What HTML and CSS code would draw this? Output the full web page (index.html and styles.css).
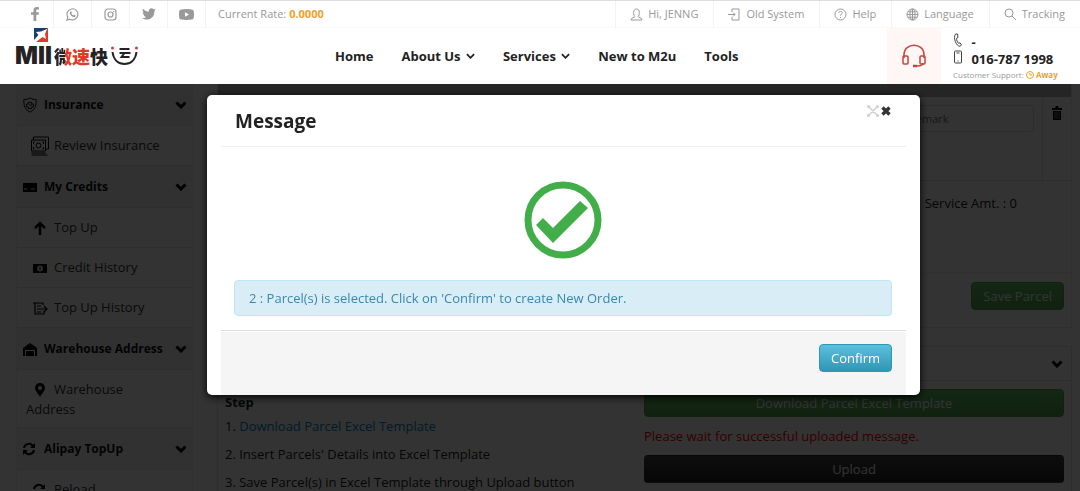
FILE: index.html
```html
<!DOCTYPE html>
<html lang="en">
<head>
    <meta charset="UTF-8">
    <meta name="viewport" content="width=device-width, initial-scale=1.0">
    <title>M2u - Parcel Order</title>
    <link rel="stylesheet" href="styles.css">
</head>
<body>
    <!-- shared icons -->
    <svg class="sprite" aria-hidden="true">
        <symbol id="chevron" viewBox="0 0 12 8"><path d="M1.500 1.500 6 6l4.500-4.500" fill="none" stroke="currentColor" stroke-width="3"/></symbol>
        <symbol id="caret" viewBox="0 0 10 6"><path d="M1 1l4 4 4-4" fill="none" stroke="currentColor" stroke-width="2"/></symbol>
        <symbol id="refresh" viewBox="0 0 14 14"><path d="M2 6a5 5 0 0 1 9-2M12 8a5 5 0 0 1-9 2" fill="none" stroke="currentColor" stroke-width="2"/><path d="M13 1v5H8zM1 13V8h5z" fill="currentColor"/></symbol>
    </svg>

    <header class="site-header">
        <div class="topbar">
            <div class="social">
                <a href="#" aria-label="Facebook"><svg width="10" height="14" viewBox="0 0 10 14"><path fill="currentColor" d="M9 .2v2.300H7.500C6.600 2.500 6.300 3 6.300 3.700V5.200H9l-.4 2.500H6.300V14H3.500V7.700H1V5.200h2.500V3.200C3.500 1.200 4.800 0 6.800 0z"/></svg></a>
                <a href="#" aria-label="WhatsApp"><svg width="13" height="13" viewBox="0 0 14 14"><path fill="none" stroke="currentColor" stroke-width="1.200" d="M1 13l.9-3.200A5.900 5.900 0 1 1 4.200 12z"/><path fill="currentColor" d="M4.800 3.700c.5-.4.9-.1 1 .3l.5 1.100c0 .4-.4.700-.6.900.5 1 1.200 1.600 2.200 2 .3-.2.600-.8.900-.7l1.400.7c.2.100 0 .8-.2 1.100-1.200 1.100-2.900.4-4.200-.8C4.200 6.900 3.400 5 4.800 3.700z"/></svg></a>
                <a href="#" aria-label="Instagram"><svg width="13" height="13" viewBox="0 0 13 13" fill="none" stroke="currentColor" stroke-width="1.200"><rect x="1" y="1" width="11" height="11" rx="3"/><circle cx="6.500" cy="6.500" r="2.500"/><path d="M9.200 3.600h1"/></svg></a>
                <a href="#" aria-label="Twitter"><svg width="14" height="12" viewBox="0 0 14 12"><path fill="currentColor" d="M13.800 1.600c-.5.200-1 .4-1.600.4.600-.3 1-.9 1.200-1.500-.6.300-1.100.5-1.800.7A2.800 2.800 0 0 0 6.800 3.700C4.400 3.600 2.400 2.500 1 .8.300 2 .6 3.700 1.900 4.500c-.5 0-.9-.1-1.300-.3 0 1.300.9 2.500 2.200 2.800-.4.100-.8.100-1.200 0 .4 1.100 1.400 1.900 2.600 2-1.200.9-2.600 1.300-4.100 1.200 6.300 3.800 12.500-.6 12.300-7.100.5-.4 1-.9 1.400-1.500z"/></svg></a>
                <a href="#" aria-label="YouTube"><svg width="15" height="11" viewBox="0 0 15 11"><path fill="currentColor" fill-rule="evenodd" d="M2 .4Q7.500-.2 13 .4 14.600.6 14.800 2.500 15.200 5.500 14.800 8.500 14.600 10.400 13 10.600 7.500 11.200 2 10.600.4 10.400.2 8.500-.2 5.500.2 2.500.4.6 2 .4zM6 3.200v4.600l4-2.300z"/></svg></a>
            </div>
            <p class="rate">Current Rate: <b>0.0000</b></p>
            <nav class="toplinks" aria-label="Account">
                <a href="#"><svg width="13" height="13" viewBox="0 0 13 13"><path d="M5 8.500C3.300 7.500 2.500 1 6.500 1S9.700 7.500 8 8.500c0 1 4 .8 4 3.500H1c0-2.700 4-2.500 4-3.500z"/></svg>Hi, JENNG</a>
                <a href="#"><svg width="13" height="13" viewBox="0 0 13 13"><path d="M4 4V1h7v11H4V9M0 6.500h7M5 4.500l2 2-2 2"/></svg>Old System</a>
                <a href="#"><svg width="13" height="13" viewBox="0 0 13 13"><circle cx="6.500" cy="6.500" r="5.500"/><path d="M4.800 5c0-2.300 3.500-2.200 3.500-.1 0 1.200-1.800 1.300-1.800 2.800M6.500 9v1"/></svg>Help</a>
                <a href="#"><svg width="13" height="13" viewBox="0 0 13 13"><circle cx="6.500" cy="6.500" r="5.500"/><ellipse cx="6.500" cy="6.500" rx="2.600" ry="5.500"/><path d="M6.500 1v11M1 6.500h11M2 3.800h9M2 9.200h9"/></svg>Language</a>
                <a href="#"><svg width="13" height="13" viewBox="0 0 13 13"><circle cx="5" cy="5" r="4"/><path d="M8 8l4 4"/></svg>Tracking</a>
            </nav>
        </div>

        <div class="mainbar">
            <a href="#" class="logo" aria-label="M2u home">
                <svg class="logo-flag" width="14" height="14" viewBox="0 0 14 14"><path fill="#17406f" d="M0 0h14L0 14z"/><path fill="#e2382c" d="M14 0v14H0z"/><path fill="#fff" d="M2 4l5-.5L13 1l-2 5 1 5-3.500-2L2 14H0v-2l4.500-5z"/></svg>
                <span class="logo-row">
                    <span class="logo-mark">MII</span>
                    <span class="logo-name"><span class="two-tone">微</span><span class="red">速</span>快</span>
                    <svg width="29" height="20" viewBox="0 0 28 20" aria-hidden="true"><path d="M2 6c1 8 6 12 12 12s11-4 12-12" fill="none" stroke="#262122" stroke-width="2"/><path d="M9 3h10M9 7h11M14 7l-3 4h8" fill="none" stroke="#262122" stroke-width="2"/><circle cx="2" cy="2" r="1.500" fill="#e2382c"/><circle cx="26" cy="2" r="1.500" fill="#e2382c"/></svg>
                </span>
            </a>
            <nav class="menu" aria-label="Main">
                <a href="#">Home</a>
                <a href="#">About Us <svg width="9" height="6"><use href="#caret"/></svg></a>
                <a href="#">Services <svg width="9" height="6"><use href="#caret"/></svg></a>
                <a href="#">New to M2u</a>
                <a href="#">Tools</a>
            </nav>
            <div class="headset">
                <svg width="24" height="24" viewBox="0 0 24 24" fill="none" stroke="#c9423d" stroke-width="1.500"><path d="M2 14v-3C2-2 22-2 22 11v3M21 19c0 2-3 3-6 3"/><rect x="1" y="12" width="5" height="8" rx="1"/><rect x="18" y="12" width="5" height="8" rx="1"/><path d="M11 22h4" stroke-width="2.500"/></svg>
            </div>
            <div class="contact">
                <p><svg width="10" height="14" viewBox="0 0 9 14"><path d="M2 1l2 0 .5 3.500-1.500.8c0 2 .8 3.500 2 5l1.500-.5L8 12l-1.500 1.300C3 13.500-.8 5 2 1z"/></svg> -</p>
                <p><svg width="10" height="14" viewBox="0 0 9 14"><rect x="1" y="1" width="7" height="12" rx="1"/><path d="M3 3h3M4 11h1"/></svg> 016-787 1998</p>
                <small>Customer Support: <b><svg width="8" height="8" viewBox="0 0 8 8"><circle cx="4" cy="4" r="3.500"/><path d="M4 2v2h2"/></svg> Away</b></small>
            </div>
        </div>
    </header>

    <main class="page">
        <aside class="sidebar">
            <h4><svg class="icon" viewBox="0 0 16 18" fill="none" stroke="currentColor"><path d="M1 3q4 0 7-2 3 2 7 2c0 7-1 11-7 14C2 14 1 10 1 3z"/><path d="M6 6h4v2h2v3h-2v2H6v-2H4V8h2zM7 9h3"/></svg>Insurance<svg class="chevron"><use href="#chevron"/></svg></h4>
            <a href="#"><svg class="wide" viewBox="0 0 19 20" fill="none" stroke="currentColor"><path d="M3 4V1h15v12h-3M1 4h14v11H1zM1 17h14M1 19h16M4 6H3v2M12 6h1v2M4 13H3v-2M12 13h1v-2"/><circle cx="8" cy="9.500" r="2.500"/></svg>Review Insurance</a>
            <h4><svg class="icon" viewBox="0 0 16 16"><path fill="currentColor" d="M1 4h14v9H1z"/><path stroke="#f8f8f8" d="M2 10h3M9 10h4"/></svg>My Credits<svg class="chevron"><use href="#chevron"/></svg></h4>
            <a href="#"><svg viewBox="0 0 16 16"><path d="M8 15V4M3 8l5-5 5 5" fill="none" stroke="currentColor" stroke-width="2.500"/></svg>Top Up</a>
            <a href="#"><svg viewBox="0 0 16 16"><path fill="currentColor" d="M1 4h14v9H1z"/><circle cx="8" cy="8.500" r="3" fill="#ddd"/><path stroke="#111" d="M8 7v3"/></svg>Credit History</a>
            <a href="#"><svg viewBox="0 0 16 16" fill="none" stroke="currentColor" stroke-width="1.200"><path d="M1 3h2v11h9v-3M3 3h8v2M5 6h4M5 9h3M8 9h7M12 6l3 3-3 3M5 12h4"/></svg>Top Up History</a>
            <h4><svg class="icon" viewBox="0 0 16 16"><path fill="currentColor" d="M1 7l7-5 7 5v8h-2V9H3v6H1zM4 10h8v5H4z"/></svg>Warehouse Address<svg class="chevron"><use href="#chevron"/></svg></h4>
            <a href="#" class="tall"><svg viewBox="0 0 16 16"><path fill="currentColor" fill-rule="evenodd" d="M8 15C6 11 3 9 3 6a5 5 0 0 1 10 0c0 3-3 5-5 9zM8 4a2 2 0 1 0 0 4 2 2 0 0 0 0-4z"/></svg>Warehouse Address</a>
            <h4><svg class="icon" viewBox="0 0 16 16"><use href="#refresh" y="1" width="14" height="14"/></svg>Alipay TopUp<svg class="chevron"><use href="#chevron"/></svg></h4>
            <a href="#"><svg viewBox="0 0 16 16"><use href="#refresh" y="1" width="14" height="14"/></svg>Reload</a>
        </aside>

        <div class="content">
            <section class="parcel">
                <div class="parcel-head"></div>
                <div class="parcel-row">
                    <div class="remark"><input type="text" placeholder="Remark" aria-label="Remark"></div>
                    <button type="button" class="trash" aria-label="Delete parcel"><svg width="12" height="14" viewBox="0 0 12 14"><path fill="currentColor" d="M1 2h3l1-2h2l1 2h3v2H1zM2 5h8v9H2z"/><path stroke="#ddd" stroke-width=".6" d="M4 6v7M6 6v7M8 6v7"/></svg></button>
                </div>
                <div class="amount">Service Amt. : 0</div>
                <div class="actions"><button type="button" class="btn green">Save Parcel</button></div>
            </section>

            <section class="import">
                <div class="import-head"><svg class="chevron"><use href="#chevron"/></svg></div>
                <div class="import-body">
                    <div class="steps">
                        <b>Step</b>
                        <p>1. <a href="#">Download Parcel Excel Template</a></p>
                        <p>2. Insert Parcels' Details into Excel Template</p>
                        <p>3. Save Parcel(s) in Excel Template through Upload button</p>
                    </div>
                    <div class="upload">
                        <button type="button" class="btn green">Download Parcel Excel Template</button>
                        <p>Please wait for successful uploaded message.</p>
                        <button type="button" class="btn black">Upload</button>
                    </div>
                </div>
            </section>
        </div>
    </main>

    <div class="overlay">
        <div class="modal" role="dialog" aria-modal="true" aria-labelledby="modal-title">
            <div class="modal-header">
                <h3 id="modal-title">Message</h3>
                <button type="button" aria-label="Expand"><svg width="12" height="12" viewBox="0 0 12 12"><path d="M1 1l10 10M11 1L1 11M1 3V1h2M9 1h2v2M11 9v2H9M3 11H1V9" fill="none" stroke="#d0d0d0" stroke-width="1.500"/></svg></button>
                <button type="button" aria-label="Close"><svg width="10" height="10" viewBox="0 0 10 10"><path d="M1.500 1.500l7 7M8.500 1.500l-7 7" stroke="#333" stroke-width="3.400"/></svg></button>
            </div>
            <div class="modal-body">
                <svg width="78" height="78" viewBox="0 0 78 78"><circle cx="39" cy="39" r="35" fill="none" stroke="#42ae49" stroke-width="7"/><path fill="#42ae49" d="M12 44l7-7 10 10 27-27 8 7-35 35z"/></svg>
                <p class="alert">2 : Parcel(s) is selected. Click on 'Confirm' to create New Order.</p>
            </div>
            <div class="modal-footer">
                <button type="button" class="btn blue">Confirm</button>
            </div>
        </div>
    </div>
</body>
</html>
```

FILE: styles.css
```css
:root {
    --text: #222;
    --muted: #999;
    --line: #f3f3f3;
    --header-height: 84px;
}

* { box-sizing: border-box; }
body { margin: 0; height: 100vh; overflow: hidden; font: 13px/20px "Open Sans", "Noto Sans CJK SC", sans-serif; color: var(--text); background: #fff; }
h3, h4, p { margin: 0; }
a { color: inherit; text-decoration: none; }
button { font: inherit; cursor: pointer; }
.sprite { display: none; }

/* header */
.site-header { height: var(--header-height); border-top: 1px solid #ddd; background: #fff; }
.topbar { display: flex; align-items: center; height: 27px; padding-left: 16px; border-bottom: 1px solid #fafafa; font-size: 11px; color: var(--muted); }
.social { display: flex; }
.social a { display: flex; align-items: center; justify-content: center; width: 38px; height: 27px; border-right: 1px solid var(--line); }
.rate { padding-left: 12px; }
.rate b { color: #f0a02c; }
.toplinks { display: flex; margin-left: auto; }
.toplinks a { display: flex; align-items: center; gap: 5px; height: 27px; padding: 0 15px 0 14px; border-left: 1px solid var(--line); }
.toplinks svg { fill: none; stroke: currentColor; stroke-width: 1; }

.mainbar { display: flex; height: 56px; padding-left: 15px; }
.logo { width: 320px; color: #262122; }
.logo-flag { display: block; margin-left: 19px; }
.logo-row { display: flex; align-items: center; gap: 2px; height: 28px; }
.logo-mark { font: 900 24px/24px Inter, sans-serif; }
.logo-name { font: 900 18px/24px "Noto Sans CJK SC", sans-serif; }
.logo-name .red { color: #e2382c; }
.two-tone { color: transparent; background: linear-gradient(90deg, #262122 60%, #e2382c 60%); background-clip: text; -webkit-background-clip: text; }
.menu { display: flex; flex: 1; align-items: center; gap: 28px; font-size: 13px; font-weight: 700; }
.menu svg { margin-left: 2px; vertical-align: 2px; }
.headset { display: flex; align-items: center; justify-content: center; width: 54px; background: #fff7f5; }
.contact { width: 139px; padding: 4px 0 0 12px; }
.contact p { height: 17px; font-weight: 700; line-height: 20px; white-space: nowrap; }
.contact p svg { margin-right: 5px; fill: none; stroke: #444; }
.contact small { display: block; font-size: 8px; line-height: 18px; color: var(--muted); }
.contact b { color: #f0a02c; }
.contact b svg { fill: none; stroke: currentColor; vertical-align: -1px; }

/* page under the overlay */
.page { display: flex; align-items: flex-start; gap: 24px; height: calc(100vh - var(--header-height)); padding: 0 8px 0 16px; overflow: hidden; }
.sidebar { width: 177px; flex: none; color: #333; border: 1px solid #eee; border-width: 0 1px; }
.sidebar h4 { display: flex; align-items: center; height: 42px; padding: 0 5px; font-size: 12px; color: #111; background: #f4f4f4; border-bottom: 1px solid #e6e6e6; }
.sidebar .icon { width: 16px; height: 16px; margin-right: 6px; color: #000; }
.chevron { width: 12px; height: 8px; margin-left: auto; color: #000; }
.sidebar a { display: block; height: 40px; padding: 9px 24px 9px 9px; border-bottom: 1px solid #e6e6e6; }
.sidebar a svg { width: 16px; height: 16px; margin: 0 6px; color: #000; vertical-align: -4px; }
.sidebar a .wide { width: 20px; height: 20px; margin: 0 4px; vertical-align: -6px; }
.sidebar a.tall { height: 58px; }

.content { flex: 1; }
.parcel { border: 1px solid #e8e8e8; border-width: 0 1px 1px; }
.parcel-head { height: 13px; background: #bbb; }
.parcel-row { display: flex; height: 84px; border-bottom: 1px solid #e3e3e3; }
.remark { flex: 1; display: flex; justify-content: flex-end; align-items: flex-start; padding: 8px; border-right: 1px solid #e3e3e3; }
.remark input { width: 134px; height: 27px; padding: 0 8px; border: 1px solid #ddd; border-radius: 4px; font: inherit; font-size: 11px; background: #fff; }
.trash { align-self: flex-start; width: 28px; padding: 8px 0; border: 0; background: none; }
.amount { height: 92px; padding: 12px 54px; text-align: right; border-bottom: 1px solid #f0f0f0; }
.actions { height: 54px; padding: 9px 7px; text-align: right; }
.btn { height: 28px; padding: 0 11px; border: 1px solid transparent; border-radius: 4px; color: #fff; }
.btn.green { border-color: #51a351; background: linear-gradient(#62c462, #51a351); }
.btn.black { background: linear-gradient(#444, #222); }
.btn.blue { border-color: #2f96b4; background: linear-gradient(#5bc0de, #2f96b4); }

.import { margin-top: 18px; border: 1px solid #e3e3e3; }
.import-head { display: flex; align-items: center; height: 34px; padding: 0 8px; border-bottom: 1px solid #e3e3e3; }
.import-body { display: flex; padding: 8px 7px; }
.steps { flex: 1; }
.steps b { display: block; margin: 3px 0 4px; }
.steps p { margin-bottom: 8px; }
.steps a { color: #0088cc; }
.upload { width: 420px; }
.upload .btn { display: block; width: 100%; }
.upload p { padding: 9px 0; color: #f00; }

/* message dialog */
.overlay { position: fixed; inset: var(--header-height) 0 0; display: flex; align-items: flex-start; padding: 11px 160px 0 207px; background: rgba(0, 0, 0, 0.8); }
.modal { flex: 1; padding: 0 14px; border-radius: 5px; background: #fff; box-shadow: 0 2px 8px #000; }
.modal-header { display: flex; align-items: flex-start; height: 52px; padding: 10px 14px; border-bottom: 1px solid #eee; }
.modal-header h3 { flex: 1; font-size: 19px; line-height: 32px; font-weight: 700; }
.modal-header button { display: flex; align-items: center; height: 12px; padding: 0 1px; border: 0; background: none; }
.modal-body { padding: 34px 14px 14px 13px; text-align: center; }
.modal-body svg { display: block; margin: 0 auto 21px; }
.alert { padding: 7px 14px; border: 1px solid #bce8f1; border-radius: 4px; text-align: left; color: #3a87ad; background: #d9edf7; }
.modal-footer { height: 65px; padding: 13px 14px; text-align: right; border-top: 1px solid #ddd; background: #f5f5f5; box-shadow: inset 0 1px #fff; }
```
